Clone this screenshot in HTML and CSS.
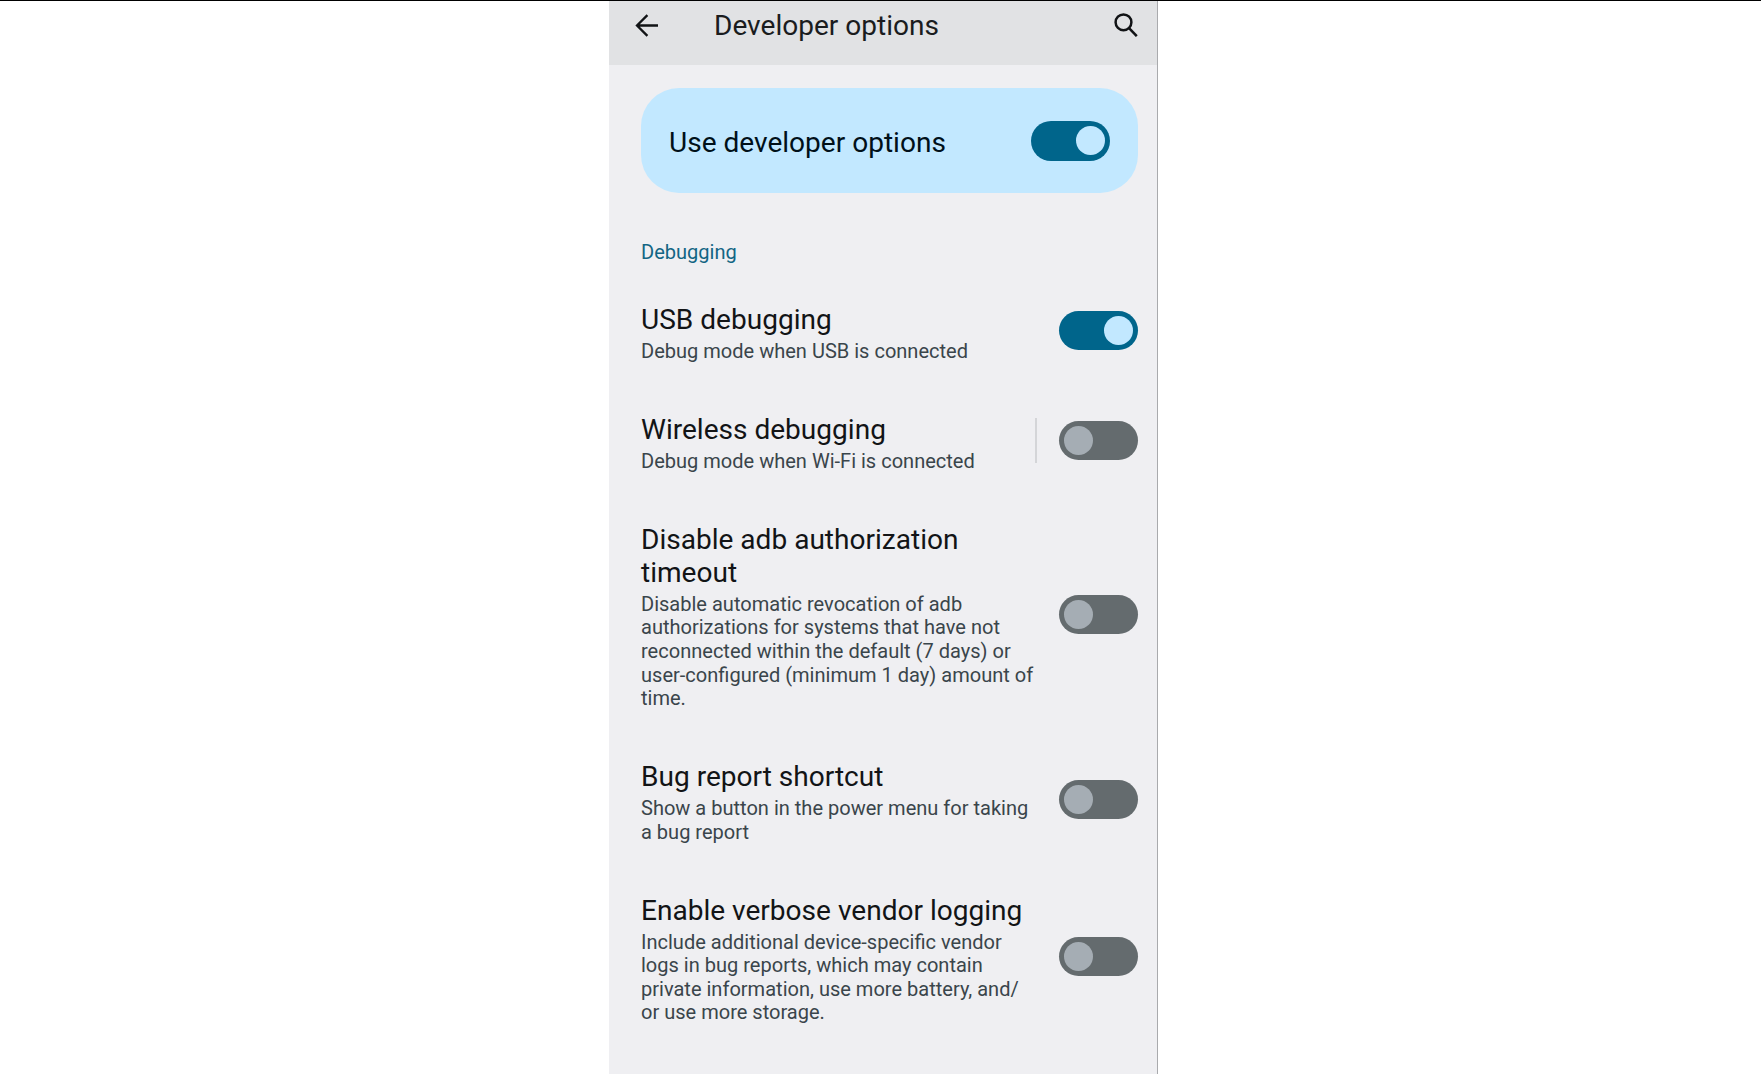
FILE: index.html
```html
<!DOCTYPE html>
<html lang="en">
<head>
<meta charset="utf-8">
<title>Developer options</title>
<link rel="stylesheet" href="styles.css">
</head>
<body>
<main class="screen">
  <header class="app-bar">
    <svg class="icon-back" viewBox="0 0 24 24" aria-label="Back"><path d="M23 12.5H2M12.4 2.1 2 12.5l10.4 10.4"/></svg>
    <h1 class="app-title">Developer options</h1>
    <svg class="icon-search" viewBox="0 0 24 24" aria-label="Search"><circle cx="9.5" cy="9.3" r="7.9"/><path d="m14.8 14.8 8 8.4"/></svg>
  </header>
  <section class="main-switch">
    <span class="main-label">Use developer options</span>
    <span class="toggle on"></span>
  </section>
  <h2 class="category">Debugging</h2>
  <div class="row">
    <div class="text"><h3 class="title">USB debugging</h3><p class="summary">Debug mode when USB is connected</p></div>
    <span class="toggle on"></span>
  </div>
  <div class="row">
    <div class="text"><h3 class="title">Wireless debugging</h3><p class="summary">Debug mode when Wi-Fi is connected</p></div>
    <span class="divider"></span>
    <span class="toggle"></span>
  </div>
  <div class="row">
    <div class="text"><h3 class="title">Disable adb authorization timeout</h3><p class="summary">Disable automatic revocation of adb authorizations for systems that have not reconnected within the default (7 days) or user-configured (minimum 1 day) amount of time.</p></div>
    <span class="toggle"></span>
  </div>
  <div class="row">
    <div class="text"><h3 class="title">Bug report shortcut</h3><p class="summary">Show a button in the power menu for taking a bug report</p></div>
    <span class="toggle"></span>
  </div>
  <div class="row">
    <div class="text"><h3 class="title">Enable verbose vendor logging</h3><p class="summary">Include additional device-specific vendor logs in bug reports, which may contain private information, use more battery, and/<wbr>or use more storage.</p></div>
    <span class="toggle"></span>
  </div>
</main>
</body>
</html>
```
FILE: styles.css
```css
* { box-sizing: border-box; }
body {
  margin: 0;
  height: 1074px;
  overflow: hidden;
  background: #fff;
  border-top: 1px solid #000;
  font-family: Roboto, "Liberation Sans", sans-serif;
}
h1, h2, h3, p { margin: 0; font-weight: 400; }
.screen {
  width: 549px;
  height: 1073px;
  margin-left: 609px;
  background: #efeff2;
  border-right: 1px solid #a9aaad;
  overflow: hidden;
}
.app-bar {
  display: flex;
  align-items: flex-start;
  height: 64px;
  padding: 0 19px 0 26px;
  background: #e1e2e4;
}
.icon-back, .icon-search {
  width: 24px;
  height: 24px;
  margin-top: 12px;
  fill: none;
  stroke: #111315;
  stroke-width: 2.3;
}
.icon-search { stroke-width: 2.5; }
.app-title {
  flex: 1;
  margin: 8px 0 0 55px;
  font-size: 28.06px;
  line-height: 33px;
  color: #1a1c1e;
}
.main-switch {
  display: flex;
  align-items: center;
  justify-content: space-between;
  height: 105px;
  margin: 23px 19px 0 32px;
  padding: 0 28px;
  border-radius: 38px;
  background: #c2e8ff;
}
.main-label { font-size: 28.06px; line-height: 33px; color: #001019; padding-top: 3px; }
.main-switch .toggle { height: 40px; }
.category {
  margin: 47px 0 0 32px;
  font-size: 20.04px;
  line-height: 24px;
  color: #136584;
}
.row {
  display: flex;
  align-items: center;
  padding: 24px 19px 25.4px 32px;
}
.category + .row { margin-top: 14.8px; }
.text { width: 394px; }
.title { font-size: 28.06px; line-height: 33px; color: #121416; }
.summary { margin-top: 4px; font-size: 20.04px; line-height: 23.6px; color: #3a454b; }
.toggle {
  position: relative;
  flex: none;
  width: 79px;
  height: 39px;
  margin-left: auto;
  border-radius: 20px;
  background: #646b6e;
}
.row .toggle, .divider { margin-bottom: 5px; }
.toggle::after {
  content: "";
  position: absolute;
  left: 5px;
  top: 5px;
  width: 29px;
  height: 29px;
  border-radius: 50%;
  background: #a5adb4;
}
.toggle.on { background: #00658b; }
.toggle.on::after { left: 45px; background: #c2e8ff; }
.divider { width: 2px; height: 45px; background: #d4d5d8; }
```
